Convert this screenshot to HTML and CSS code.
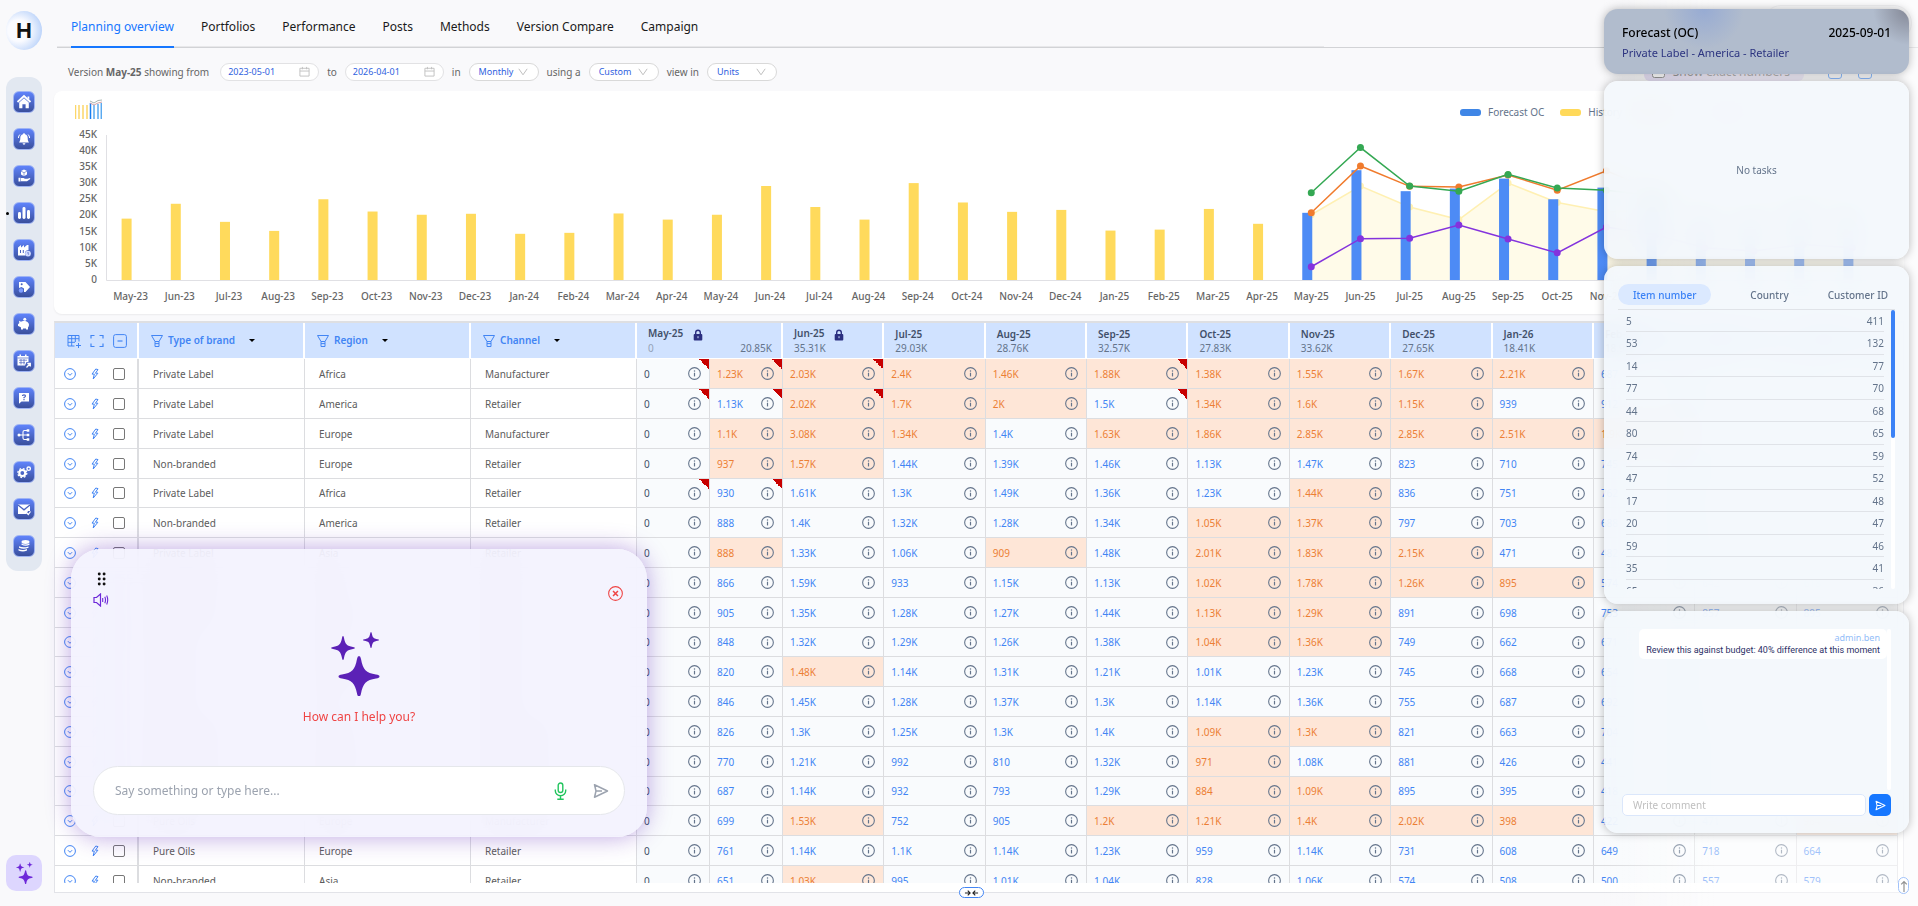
FILE: index.html
```html
<!DOCTYPE html>
<html lang="en">
<head>
    <meta charset="utf-8">
    <title>Planning overview</title>
    <link rel="stylesheet" href="styles.css">
</head>

<body>
<svg class="defs" aria-hidden="true">
    <symbol id="i-info" viewBox="0 0 12 12"><circle cx="6" cy="6" r="5.4" fill="none" stroke="currentColor"/><path d="M6 5.3v3.4" stroke="currentColor" stroke-width="1.1"/><circle cx="6" cy="3.6" r=".7" fill="currentColor"/></symbol>
    <symbol id="i-down" viewBox="0 0 12 12"><circle cx="6" cy="6" r="5.4" fill="none" stroke="currentColor"/><path d="M3.9 5.2 6 7.3l2.100-2.100" fill="none" stroke="currentColor"/></symbol>
    <symbol id="i-bolt" viewBox="0 0 12 12"><path d="M6.800 1 3 6.100h2.300L4.200 11l4.700-5.800H6.400L9 1.600z" fill="none" stroke="currentColor" stroke-linejoin="round"/></symbol>
    <symbol id="i-funnel" viewBox="0 0 14 14"><path d="M1.500 1.500h11L9 7.500H5zM5 7.500v5h4v-5M5 9.600h4" fill="none" stroke="currentColor" stroke-linejoin="round"/></symbol>
    <symbol id="i-lock" viewBox="0 0 10 12"><path d="M2.700 5.500V3.500a2.300 2.300 0 0 1 4.600 0v2" fill="none" stroke="currentColor" stroke-width="1.400"/><rect x=".7" y="5" width="8.600" height="6.500" rx="1" fill="currentColor"/><path d="M5 7.200v2" stroke="#d0e2ff" stroke-width="1"/></symbol>
    <symbol id="i-calendar" viewBox="0 0 12 12"><path d="M1 2.500h10v8.500H1zM1 5.500h10M3.700 1v2.600M8.300 1v2.600" fill="none" stroke="currentColor"/></symbol>
    <symbol id="i-chevron" viewBox="0 0 10 8"><path d="M.8 .8 5 6.800 9.200.8" fill="none" stroke="currentColor"/></symbol>
    <symbol id="i-send" viewBox="0 0 16 16"><path d="M1.500 1.800 14.500 8l-13 6.200L3 8zM3 8h6" fill="none" stroke="currentColor" stroke-width="1.500" stroke-linejoin="round"/></symbol>
    <symbol id="i-sparkles" viewBox="0 0 49 64" preserveAspectRatio="xMinYMid"><path d="M28 24q1.500 0 2 3c2 11 5 14 15 15.500q3.500.5 3.500 2t-3.500 2c-10 1.500-13 5-15 15q-.5 3-2 3t-2-3c-2-10-5-13.500-15-15q-3.500-.5-3.500-2t3.500-2C21 41 24 38 26 27q.5-3 2-3zM12 4q.8 0 1 2c1.300 6.500 3 8 9 9q2 .3 2 1t-2 1c-6 1-7.700 2.500-9 9q-.2 2-1 2t-1-2c-1.300-6.500-3-8-9-9q-2-.3-2-1t2-1c6-1 7.700-2.500 9-9q.2-2 1-2zM40 0q.6 0 .8 1.500c.8 4 1.700 5 5.700 5.700q1.500.2 1.500.8t-1.500.8c-4 .7-4.900 1.700-5.700 5.700Q40.600 16 40 16t-.8-1.500c-.8-4-1.700-5-5.700-5.700Q32 8.600 32 8t1.500-.8c4-.7 4.900-1.700 5.700-5.700Q39.400 0 40 0z" fill="currentColor"/></symbol>
</svg>

<aside class="sidebar">
    <a class="logo" href="#">H</a>
    <nav class="menu" aria-label="Main menu">
        <a href="#" title="Home"><svg viewBox="0 0 16 16"><path d="M1.500 8 8 2l6.500 6" fill="none" stroke="#fff" stroke-width="1.800"/><path d="M3.200 8.500 8 4.200l4.800 4.300v5.700H9.600v-4H6.400v4H3.200zM11.500 2.500h1.800v3.200l-1.800-1.600z"/></svg></a>
        <a href="#" title="Alerts"><svg viewBox="0 0 16 16"><path d="M8 2.200c.7 0 1 .5 1 1 2 .6 2.700 2 2.700 4 0 2.300.7 3 1.300 4.300H3c.6-1.300 1.300-2 1.300-4.300 0-2 .7-3.400 2.700-4 0-.5.300-1 1-1zM6.600 12.300h2.800a1.400 1.400 0 0 1-2.800 0z"/><path d="M3.900 3.500Q2.500 4.800 2.400 7M12.100 3.500q1.400 1.300 1.500 3.500" fill="none" stroke="#fff"/></svg></a>
        <a href="#" title="Products"><svg viewBox="0 0 16 16"><path d="m8 1.500 3 1.500v3.500L8 8.300 5 6.500V3z"/><path d="M5 3.200 8 4.700l3-1.500M8 4.700v3.600" fill="none" stroke="#4a63c0" stroke-width=".6"/><path d="M2.500 9.700h2v3.800h-2zM5 10h2.500l1.500.8h2.500l2.500-.8.3.9-3.300 2.300H5z"/></svg></a>
        <a href="#" class="current" title="Planning"><svg viewBox="0 0 16 16"><rect x="2" y="7" width="3" height="7" rx="1.400"/><rect x="6.500" y="2" width="3" height="12" rx="1.400"/><rect x="11" y="5" width="3" height="9" rx="1.400"/></svg></a>
        <a href="#" title="Production"><svg viewBox="0 0 16 16"><path d="M2 13.500v-8L5 3v2.500L8 3v2.500L11 3h1.500v5a3.500 3.500 0 0 0-3 5.500z"/><path d="M4.500 8v3M7.300 8v3" stroke="#4a63c0"/><circle cx="12" cy="11.600" r="2.900" fill="#cfd9ff"/><path d="M12 10v1.700l1 .8" fill="none" stroke="#4a63c0" stroke-width=".8"/></svg></a>
        <a href="#" title="Pricing"><svg viewBox="0 0 16 16"><path d="M3 3h6.500L14 8l-4.500 5H8V9.500L5.500 8 3 9z"/><circle cx="5.700" cy="5.300" r="1" fill="#4a63c0"/><circle cx="5" cy="11.500" r="2.200" fill="#7f9dff"/></svg></a>
        <a href="#" title="Budget"><svg viewBox="0 0 16 16"><path d="M2 8.500c0-.8 1-.8 1.300-1.500L3 4.800l2 .9c1-.8 5-1.200 6.800.5 1.600 1.300 1.600 3.600.2 5.200V13.500h-2v-1H7v1H5v-2C4 11 3.500 10.300 2 10z"/><circle cx="8.800" cy="3.200" r="1.500"/></svg></a>
        <a href="#" title="Schedule"><svg viewBox="0 0 16 16"><path d="M1.500 3h11v6h-2L9 12.500H1.500zM3.500 1.500H5V3H3.500zM9 1.500h1.500V3H9z"/><path d="M1.500 5h11M3 7.200h8M3 9.700h6M5 6v5.500M8 6v5.500" stroke="#4a63c0" stroke-width=".7"/><path d="m10.500 14.500 3.500-3.700M11.300 10.500H14.300V13.500" fill="none" stroke="#fff" stroke-width="1.300"/></svg></a>
        <a href="#" title="Help"><svg viewBox="0 0 16 16"><path d="M3 3h10v8.500H5.500L3 13.800z"/><path d="M6.500 6q0-1.200 1.500-1.200T9.500 6Q9.500 6.800 8 7.500v.8M8 9v1.200" fill="none" stroke="#4a63c0" stroke-width="1.200"/></svg></a>
        <a href="#" title="Hierarchy"><svg viewBox="0 0 16 16"><path d="M2 8h5M12 3.500H8.500Q7 3.500 7 5v6q0 1.500 1.500 1.500H12M7 8h5" fill="none" stroke="#fff" stroke-width="1.100"/><circle cx="3" cy="8" r="1.500"/><path d="M10.700 2.300h2.600v2.400h-2.600zM10.700 6.800h2.600v2.400h-2.600zM10.700 11.300h2.600v2.400h-2.600z"/></svg></a>
        <a href="#" title="Settings"><svg viewBox="0 0 16 16"><circle cx="6.300" cy="9" r="3" fill="none" stroke="#fff" stroke-width="2.200"/><circle cx="6.300" cy="9" r="4.500" fill="none" stroke="#fff" stroke-width="1.300" stroke-dasharray="1.800 1.730"/><circle cx="12.700" cy="4.700" r="1.700" fill="none" stroke="#fff" stroke-width="1.400"/></svg></a>
        <a href="#" title="Messages"><svg viewBox="0 0 16 16"><path d="M2 3.500h12V10h-2l-1.500 3H2z"/><path d="m2 4 6 4.800L14 4" fill="none" stroke="#4a63c0" stroke-width="1.300"/><path d="m11 12 1.300 1.500 2.200-3" fill="none" stroke="#fff" stroke-width="1.200"/></svg></a>
        <a href="#" title="Data"><svg viewBox="0 0 16 16"><ellipse cx="9.500" cy="4" rx="4" ry="1.900"/><path d="M5.500 5.500q3.500 2 8 0v1.300q-3.500 2-8 0zM3 8.300q4 2 9.500.2v1.300q-5 2-9.500 0zM2.500 10.900q4 2 8.500.2v1.300q-4 2-8.500 0z"/></svg></a>
    </nav>
    <button class="assistant" title="Assistant"><svg><use href="#i-sparkles"/></svg></button>
</aside>

<main>
    <header class="topbar">
        <nav class="tabs">
            <a href="#" class="active">Planning overview</a>
            <a href="#">Portfolios</a>
            <a href="#">Performance</a>
            <a href="#">Posts</a>
            <a href="#">Methods</a>
            <a href="#">Version Compare</a>
            <a href="#">Campaign</a>
        </nav>
        <div class="user"></div>
    </header>

    <form class="filters">
        <span class="version">Version <b>May-25</b> showing from</span>
        <label class="pill date"><input type="text" aria-label="From date" value="2023-05-01"><svg><use href="#i-calendar"/></svg></label>
        <span>to</span>
        <label class="pill date"><input type="text" aria-label="To date" value="2026-04-01"><svg><use href="#i-calendar"/></svg></label>
        <span>in</span>
        <label class="pill choice"><select aria-label="Period"><option>Monthly</option></select><svg><use href="#i-chevron"/></svg></label>
        <span>using a</span>
        <label class="pill choice"><select aria-label="Range"><option>Custom</option></select><svg><use href="#i-chevron"/></svg></label>
        <span>view in</span>
        <label class="pill choice"><select aria-label="Unit"><option>Units</option></select><svg><use href="#i-chevron"/></svg></label>
        <label class="exact"><input type="checkbox"> Show exact numbers</label>
        <button type="button" class="tool" title="Download"></button>
        <button type="button" class="tool" title="Upload"></button>
    </form>

    <section class="card">
        <div class="chart-head">
            <svg class="mini" viewBox="0 0 27 20"><path d="M.5 6v14M4 6v14M8 6v14M12 6v14" stroke="#fcd669" stroke-width="1.500"/><path d="M15.500 4v16" stroke="#1a7ff0" stroke-width="1.500"/><path d="M19 6v14M23 5v15M26.300 4v16" stroke="#5aaaf0" stroke-width="1.500"/><path d="m15 2 4 2 4-2.500L27 1" fill="none" stroke="#a9b5b0"/><path d="m15 4 4 2 4-2 4-1" fill="none" stroke="#d3a4aa"/></svg>
            <ul class="legend">
                <li class="l-forecast">Forecast OC</li>
                <li class="l-history">History</li>
                <li class="l-budget">Budget</li>
                <li class="l-plan">Plan</li>
            </ul>
        </div>
        <svg id="chart"></svg>
    </section>

    <section class="grid">
        <div class="scroll">
            <table>
                <colgroup>
                    <col class="c-tools"><col class="c-attr"><col class="c-attr"><col class="c-attr">
                    <col class="c-half"><col class="c-half">
                    <col span="11">
                </colgroup>
                <thead>
                    <tr id="head">
                        <th class="tools"><div>
                            <svg viewBox="0 0 14 14"><path d="M1 1.500h11v6M7.500 12H1V1.500M1 4.700h11M1 8.300h7M4.700 1.500V12M8.300 1.500V8M11.500 9v5M9 11.500h5" fill="none" stroke="currentColor"/></svg>
                            <svg viewBox="0 0 14 14"><path d="M1 4.500V1.500h3.500M9.500 1.500H13v3M13 9.500v3H9.500M4.500 12.500H1v-3" fill="none" stroke="currentColor" stroke-width="1.200"/></svg>
                            <svg viewBox="0 0 14 14"><rect x=".6" y=".6" width="12.800" height="12.800" rx="2" fill="none" stroke="currentColor"/><path d="M4.500 7h5" stroke="currentColor" stroke-width="1.200"/></svg>
                        </div></th>
                        <th class="attr"><svg><use href="#i-funnel"/></svg>Type of brand<i></i></th>
                        <th class="attr"><svg><use href="#i-funnel"/></svg>Region<i></i></th>
                        <th class="attr"><svg><use href="#i-funnel"/></svg>Channel<i></i></th>
                        <th class="month" colspan="2">May-25 <svg><use href="#i-lock"/></svg><div><em>0</em><span>20.85K</span></div></th>
                        <th class="month">Jun-25 <svg><use href="#i-lock"/></svg><div>35.31K</div></th>
                        <th class="month">Jul-25<div>29.03K</div></th>
                        <th class="month">Aug-25<div>28.76K</div></th>
                        <th class="month">Sep-25<div>32.57K</div></th>
                        <th class="month">Oct-25<div>27.83K</div></th>
                        <th class="month">Nov-25<div>33.62K</div></th>
                        <th class="month">Dec-25<div>27.65K</div></th>
                        <th class="month">Jan-26<div>18.41K</div></th>
                        <th class="month">Feb-26<div>18.92K</div></th>
                        <th class="month">Mar-26<div>22.14K</div></th>
                        <th class="month">Apr-26<div>19.87K</div></th>
                    </tr>
                </thead>
                <tbody id="rows"></tbody>
            </table>
        </div>
        <button class="collapse" title="Collapse"><svg viewBox="0 0 16 8"><path d="M1 4h5M4 1.500 6.500 4 4 6.500M15 4h-5M12 1.500 9.500 4 12 6.500" fill="none" stroke="currentColor" stroke-width="1.200"/></svg></button>
        <button class="to-top" title="Back to top"><svg viewBox="0 0 8 12"><path d="M4 12V1.500M1.200 4.300 4 1.500l2.800 2.800" fill="none" stroke="currentColor" stroke-width="1.200"/></svg></button>
    </section>
</main>

<section class="chat">
    <div class="chat-tools">
        <svg class="drag" viewBox="0 0 8 12"><g fill="#111"><circle cx="2" cy="1.500" r="1.300"/><circle cx="6.300" cy="1.500" r="1.300"/><circle cx="2" cy="6" r="1.300"/><circle cx="6.300" cy="6" r="1.300"/><circle cx="2" cy="10.500" r="1.300"/><circle cx="6.300" cy="10.500" r="1.300"/></g></svg>
        <button class="close" title="Close"><svg viewBox="0 0 14 14"><circle cx="7" cy="7" r="6.400" fill="none" stroke="currentColor"/><path d="m4.700 4.700 4.600 4.600M9.300 4.700 4.700 9.300" stroke="currentColor" stroke-width="1.400"/></svg></button>
        <button class="sound" title="Sound"><svg viewBox="0 0 16 14"><path d="M1 4.500h2.500L7.500 1v12L3.500 9.500H1z" fill="none" stroke="currentColor" stroke-width="1.200"/><path d="M9.700 5v4M11.800 3.800q1.400 3.200 0 6.400M13.700 2.500q2 4.500 0 9" fill="none" stroke="currentColor" stroke-width="1.100"/></svg></button>
    </div>
    <svg class="stars"><use href="#i-sparkles"/></svg>
    <p>How can I help you?</p>
    <form class="ask">
        <input type="text" aria-label="Message" placeholder="Say something or type here...">
        <button type="button" class="mic" title="Speak"><svg viewBox="0 0 12 18"><rect x="3.700" y="1" width="4.600" height="9.500" rx="2.300" fill="none" stroke="currentColor" stroke-width="1.400"/><path d="M.8 7.500v1.300a5.200 5 0 0 0 10.400 0V7.500M6 14v3M2.800 17.200h6.400" fill="none" stroke="currentColor" stroke-width="1.400"/></svg></button>
        <button type="button" class="send" title="Send"><svg><use href="#i-send"/></svg></button>
    </form>
</section>

<aside class="detail">
    <header class="panel title">
        <h2><span>Forecast (OC)</span><span>2025-09-01</span></h2>
        <p>Private Label - America - Retailer</p>
    </header>
    <section class="panel tasks">No tasks</section>
    <section class="panel items">
        <div class="switch">
            <button class="on">Item number</button>
            <button>Country</button>
            <button>Customer ID</button>
        </div>
        <div class="list">
            <table>
                <tr><td>5</td><td>411</td></tr>
                <tr><td>53</td><td>132</td></tr>
                <tr><td>14</td><td>77</td></tr>
                <tr><td>77</td><td>70</td></tr>
                <tr><td>44</td><td>68</td></tr>
                <tr><td>80</td><td>65</td></tr>
                <tr><td>74</td><td>59</td></tr>
                <tr><td>47</td><td>52</td></tr>
                <tr><td>17</td><td>48</td></tr>
                <tr><td>20</td><td>47</td></tr>
                <tr><td>59</td><td>46</td></tr>
                <tr><td>35</td><td>41</td></tr>
                <tr><td>65</td><td>36</td></tr>
            </table>
            <div class="track"><div class="thumb"></div></div>
        </div>
    </section>
    <section class="panel comments">
        <div class="thread">
            <div class="message"><b>admin.ben</b>Review this against budget: 40% difference at this moment</div>
            <div class="track"></div>
        </div>
        <form>
            <input type="text" aria-label="Comment" placeholder="Write comment">
            <button type="button" title="Send"><svg><use href="#i-send"/></svg></button>
        </form>
    </section>
</aside>

<script src="script.js"></script>
</body>
</html>
```
FILE: styles.css
```css
* {
    box-sizing: border-box;
}

body {
    margin: 0;
    height: 100vh;
    display: flex;
    overflow: hidden;
    background: #f9f9fb;
    color: #666;
    font: 10px/14px "Noto Sans", "Open Sans", sans-serif;
}

button, input, select {
    font: inherit;
    color: inherit;
    margin: 0;
    padding: 0;
    border: 0;
    background: none;
    outline: none;
}

a {
    color: inherit;
    text-decoration: none;
}

svg {
    display: block;
    flex: none;
}

.defs {
    position: absolute;
    width: 0;
    height: 0;
}

/* sidebar */
.sidebar {
    flex: 0 0 54px;
    padding: 11px 12px 15px 6px;
    display: flex;
    flex-direction: column;
}

.logo {
    height: 39px;
    margin-bottom: 27px;
    border-radius: 50%;
    background: radial-gradient(circle at 35% 50%, #fafbff 35%, #c9dcfb 70%, #8fb6f7);
    color: #111;
    font: bold 22px/39px "Liberation Sans", sans-serif;
    text-align: center;
}

.menu {
    display: flex;
    flex-direction: column;
    align-items: center;
    gap: 15px;
    padding: 14px 0;
    border-radius: 12px;
    background: #e2e8f1;
}

.menu a {
    position: relative;
    width: 22px;
    height: 22px;
    padding: 2px;
    border: 1px solid #9fb4f4;
    border-radius: 6px;
    background: linear-gradient(#5f83fb, #3a4f9c);
}

.menu svg {
    width: 16px;
    height: 16px;
    fill: #fff;
}

.menu .current::before {
    content: "";
    position: absolute;
    left: -8px;
    top: 9px;
    width: 3px;
    height: 3px;
    border-radius: 50%;
    background: #000;
}

.assistant {
    margin-top: auto;
    height: 36px;
    border-radius: 10px;
    background: #ddd6fe;
    color: #6d28d9;
}

.assistant svg {
    width: 17px;
    height: 22px;
    margin: auto;
}

/* main column */
main {
    flex: 1;
    min-width: 0;
    display: flex;
    flex-direction: column;
}

.topbar {
    height: 48px;
    margin-left: 3px;
    border-bottom: 1px solid #d2d3d6;
    display: flex;
    justify-content: space-between;
}

.tabs {
    width: 1267px;
    padding: 0 14px;
    display: flex;
    gap: 27px;
    border-bottom: 1px solid #e8e8ea;
    color: #1a1a1a;
    font-size: 12px;
}

.tabs a {
    padding-top: 19px;
    line-height: 16px;
}

.tabs .active {
    color: #1677ff;
    border-bottom: 2px solid #1677ff;
    margin-bottom: -2px;
}

.user {
    width: 149px;
    height: 36px;
    margin: 5px 6px 0 0;
    border-radius: 18px;
    border: 1px solid #e4e4e8;
}

.filters {
    height: 43px;
    padding: 4px 46px 0 14px;
    display: flex;
    align-items: center;
    gap: 8px;
}

.version {
    margin-right: 3px;
}

.pill {
    height: 18px;
    display: flex;
    align-items: center;
    justify-content: space-between;
    border: 1px solid #d9d9d9;
    border-radius: 9px;
    background: #fff;
    color: #2f62e0;
    font-size: 9px;
}

.date {
    width: 99px;
    padding: 0 8px 0 7px;
    border-color: #e2e2e4;
}

.date input {
    width: 60px;
}

.date svg {
    width: 11px;
    height: 11px;
    color: #bfbfbf;
}

.choice {
    width: 70px;
    padding: 0 10px 0 9px;
}

.choice select {
    width: 38px;
    appearance: none;
}

.choice svg {
    width: 10px;
    height: 8px;
    color: #bfbfbf;
}

.exact {
    margin-left: auto;
    margin-right: 8px;
    height: 18px;
    padding: 0 14px 0 8px;
    display: flex;
    align-items: center;
    gap: 8px;
    border-radius: 6px;
    background: #e4dcf6;
    font-size: 12px;
}

.tool {
    width: 14px;
    height: 14px;
    margin-left: 8px;
    border: 1px solid #1677ff;
    border-radius: 3px;
}

.card {
    height: 223px;
    margin-right: 14px;
    padding-top: 8px;
    border-radius: 8px;
    background: #fff;
    box-shadow: 0 1px 2px rgba(0, 0, 0, .06);
}

.chart-head {
    height: 22px;
    padding-left: 21px;
    display: flex;
    justify-content: space-between;
}

.mini {
    width: 27px;
    height: 20px;
}

.legend {
    width: 444px;
    margin: 0;
    padding: 6px 0 0;
    list-style: none;
    display: flex;
    gap: 16px;
    color: #64748b;
}

.legend li::before {
    content: "";
    display: inline-block;
    width: 21px;
    height: 7px;
    margin-right: 7px;
    border-radius: 3px;
    background: #ffd95a;
}

.legend .l-forecast::before {
    background: #3f86e6;
}

.legend .l-budget::before {
    background: #f07b2d;
}

.legend .l-plan::before {
    background: #8433dd;
}

#chart {
    width: 100%;
    height: 193px;
}

#chart text {
    fill: #666;
    font-weight: 500;
}

/* planning table */
.grid {
    position: relative;
    flex: 1;
    min-height: 0;
    margin: 7px 14px 13px 0;
    padding-bottom: 9px;
    display: flex;
    border: 1px solid #e2e3e8;
    border-top: 2px solid #dedfe2;
    background: #fff;
}

.scroll {
    flex: 1;
    overflow: hidden;
    padding-right: 5px;
}

.grid table {
    width: 100%;
    table-layout: fixed;
    border-collapse: separate;
    border-spacing: 0;
}

.c-tools {
    width: 84px;
}

.c-attr {
    width: 166px;
}

.c-half {
    width: 73px;
}

.grid th {
    height: 36px;
    padding: 0;
    background: #d0e2ff;
    border-right: 2px solid #fff;
    border-bottom: 1px solid #fff;
    text-align: left;
    font-weight: 600;
    white-space: nowrap;
}

.grid th svg {
    display: inline-block;
    vertical-align: middle;
}

.grid .attr {
    padding-left: 11px;
    color: #4285f4;
}

.attr svg {
    width: 14px;
    height: 14px;
    margin-right: 4px;
}

.attr i {
    display: inline-block;
    margin-left: 14px;
    vertical-align: 2px;
    border: 3px solid transparent;
    border-top-color: #000;
    border-bottom: 0;
}

.tools div {
    display: flex;
    justify-content: space-between;
    padding: 0 10px 0 12px;
    color: #4285f4;
}

.tools div svg {
    width: 14px;
    height: 14px;
}

.grid .month {
    padding-left: 11px;
    color: #42506a;
}

.month svg {
    width: 10px;
    height: 12px;
    margin-left: 7px;
    color: #2b2f80;
}

.month div {
    display: flex;
    justify-content: space-between;
    padding-right: 9px;
    font-weight: 400;
    color: #64748b;
}

.month em {
    font-style: normal;
    color: #94a3b8;
}

.grid td {
    height: 30px;
    padding: 0;
    border-right: 1px solid #dcdde0;
    border-bottom: 1px solid #dcdde0;
    background-color: #f9fbfd;
    color: #4285f4;
}

.grid tr:nth-child(5n) td {
    height: 29px;
}

.grid td.tools {
    background: #fff;
    border-right-width: 2px;
}

.tools button {
    display: block;
}

.tools div button svg {
    width: 12px;
    height: 12px;
}

.tools input {
    display: block;
    width: 12px;
    height: 12px;
    border: 1px solid #777;
    border-radius: 2px;
    appearance: none;
    background: #fff;
}

.grid td.tools div {
    padding: 0 12px 0 9px;
    align-items: center;
}

.grid td.attr {
    padding-left: 14px;
    background: #fff;
    color: #5c5c5c;
}

.value div {
    display: flex;
    justify-content: space-between;
    align-items: center;
    padding: 0 8px 0 7px;
}

.value svg {
    width: 13px;
    height: 13px;
    color: #64748b;
}

.grid td.base {
    color: #42506a;
}

.grid td.high {
    background-color: #fee6d7;
    color: #ec7f35;
}

.flag {
    background-image: linear-gradient(to bottom left, #c80000 50%, transparent 50%);
    background-position: top right;
    background-size: 10px 10px;
    background-repeat: no-repeat;
}

.collapse, .to-top {
    position: absolute;
    border: 1px solid #4285f4;
    border-radius: 6px;
    background: #fff;
    color: #222;
}

.collapse {
    left: calc(50% - 20px);
    bottom: -6px;
    width: 25px;
    height: 11px;
}

.collapse svg {
    width: 15px;
    height: 8px;
    margin: auto;
}

.to-top {
    right: -6px;
    bottom: -2px;
    width: 11px;
    height: 17px;
}

.to-top svg {
    width: 8px;
    height: 12px;
    margin: auto;
}

/* assistant */
.chat {
    position: fixed;
    left: 71px;
    bottom: 69px;
    width: 576px;
    padding: 23px 22px 22px;
    display: flex;
    flex-direction: column;
    border-radius: 30px;
    background: rgba(243, 241, 254, .88);
    backdrop-filter: blur(14px);
    box-shadow: 0 0 24px rgba(91, 33, 182, .4);
}

.chat-tools {
    display: grid;
    grid-template-columns: 1fr 14px;
    align-items: center;
    row-gap: 7px;
    padding: 0 3px 0 0;
}

.drag {
    width: 9px;
    height: 14px;
    margin-left: 4px;
}

.close {
    grid-row: 1 / 3;
    grid-column: 2;
    margin-top: 7px;
    color: #ef4444;
}

.close svg {
    width: 15px;
    height: 15px;
}

.sound {
    width: 16px;
    color: #6d28d9;
}

.sound svg {
    width: 16px;
    height: 14px;
}

.stars {
    width: 56px;
    height: 64px;
    margin: 25px auto 0;
    color: #5b21b6;
}

.chat p {
    margin: 13px 0 41px;
    text-align: center;
    color: #ef4444;
    font-size: 12px;
    line-height: 16px;
}

.ask {
    display: flex;
    align-items: center;
    height: 49px;
    padding: 0 15px 0 21px;
    border: 1px solid #e5e7eb;
    border-radius: 25px;
    background: #fff;
    font-size: 12px;
}

.ask input {
    flex: 1;
    height: 30px;
}

.ask ::placeholder {
    color: #9ca3af;
}

.mic {
    margin-right: 26px;
    color: #22c55e;
}

.mic svg {
    width: 13px;
    height: 18px;
}

.send {
    color: #9ca3af;
}

.send svg {
    width: 16px;
    height: 16px;
}

/* detail panels on the right */
.detail {
    position: fixed;
    top: 0;
    right: 0;
    bottom: 0;
    width: 314px;
    padding: 9px 9px 0 0;
    display: flex;
    flex-direction: column;
    gap: 7px;
    background: linear-gradient(90deg, rgba(255, 255, 255, 0), rgba(255, 255, 255, .5) 35%);
    color: #64748b;
}

.panel {
    border-radius: 14px;
    background: rgba(243, 247, 252, .9);
    backdrop-filter: blur(14px);
    box-shadow: 0 0 10px rgba(0, 0, 0, .28);
}

.title {
    padding: 15px 18px 13px;
    background: radial-gradient(circle at 100% 0, rgba(125, 128, 142, .9), transparent 36px), radial-gradient(circle at 100px 0, #97abd3, transparent 40px), #b1bccd;
}

.title h2 {
    margin: 0;
    display: flex;
    justify-content: space-between;
    color: #000;
    font-size: 12px;
    font-weight: 500;
    line-height: 17px;
}

.title p {
    margin: 4px 0 0;
    font-size: 11px;
    line-height: 16px;
    color: #2c3480;
}

.tasks {
    height: 178px;
    display: flex;
    align-items: center;
    justify-content: center;
}

.items {
    padding: 18px 14px 15px;
}

.switch {
    display: flex;
    justify-content: space-between;
    align-items: center;
    padding: 0 7px 4px 0;
    border-bottom: 1px solid #e0e3e8;
}

.switch button {
    height: 21px;
    font-weight: 500;
}

.switch .on {
    padding: 0 15px;
    border-radius: 11px;
    background: #dbe9ff;
    color: #3b82f6;
}

.list {
    height: 279px;
    padding-left: 8px;
    display: flex;
    justify-content: space-between;
    overflow: hidden;
}

.list table {
    width: 258px;
    border-spacing: 0;
}

.list td {
    height: 22px;
    padding: 0;
    border-bottom: 1px solid #e0e3e8;
}

.list tr:nth-child(even) td {
    height: 23px;
}

.list td:last-child {
    text-align: right;
}

.track {
    width: 4px;
    border-radius: 2px;
    background: #fff;
}

.thumb {
    height: 128px;
    border-radius: 2px;
    background: #3b82f6;
}

.comments {
    padding: 18px 18px 17px;
}

.thread {
    height: 161px;
    display: flex;
    justify-content: flex-end;
    align-items: flex-start;
}

.thread .track {
    align-self: stretch;
}

.message {
    padding: 3px 7px;
    border-radius: 5px;
    background: #fff;
    color: #2c2f66;
    font: 9px/12px Roboto, sans-serif;
    text-align: right;
}

.message b {
    display: block;
    font-family: "Noto Sans", sans-serif;
    font-weight: 400;
    color: #93bdf8;
}

.comments form {
    display: flex;
    gap: 3px;
    margin-top: 4px;
}

.comments input {
    flex: 1;
    height: 22px;
    padding: 0 10px;
    border: 1px solid #dbe7fb;
    border-radius: 5px;
    background: #fff;
}

.comments ::placeholder {
    color: #bfbfbf;
}

.comments button {
    width: 22px;
    height: 22px;
    border-radius: 5px;
    background: #1677ff;
    color: #fff;
}

.comments button svg {
    width: 11px;
    height: 11px;
    margin: auto;
}
```
FILE: script.js
```javascript
// "*" marks a highlighted value, "!" a flagged one
var rows = [
    ['Private Label', 'Africa', 'Manufacturer', '0! 1.23K*! 2.03K*! 2.4K* 1.46K* 1.88K*! 1.38K* 1.55K* 1.67K* 2.21K* 687 741 702'],
    ['Private Label', 'America', 'Retailer', '0! 1.13K! 2.02K*! 1.7K* 2K* 1.5K! 1.34K* 1.6K* 1.15K* 939 912 877 864'],
    ['Private Label', 'Europe', 'Manufacturer', '0 1.1K* 3.08K* 1.34K* 1.4K 1.63K* 1.86K* 2.85K* 2.85K* 2.51K* 1.9K* 1.2K 1.1K'],
    ['Non-branded', 'Europe', 'Retailer', '0 937* 1.57K* 1.44K 1.39K 1.46K 1.13K 1.47K 823 710 745 802 790'],
    ['Private Label', 'Africa', 'Retailer', '0! 930! 1.61K 1.3K 1.49K 1.36K 1.23K 1.44K* 836 751 762 811 795'],
    ['Non-branded', 'America', 'Retailer', '0 888 1.4K 1.32K 1.28K 1.34K 1.05K* 1.37K* 797 703 688 754 731'],
    ['Private Label', 'Asia', 'Retailer', '0 888* 1.33K 1.06K 909* 1.48K 2.01K* 1.83K* 2.15K* 471 482 530 512'],
    ['Non-branded', 'Africa', 'Retailer', '0 866 1.59K 933 1.15K 1.13K 1.02K* 1.78K* 1.26K* 895* 574 642 618'],
    ['Private Label', 'Europe', 'Retailer', '0 905 1.35K 1.28K 1.27K 1.44K 1.13K* 1.29K* 891 698 753 857 895'],
    ['Pure Oils', 'Africa', 'Retailer', '0 848 1.32K 1.29K 1.26K 1.38K 1.04K* 1.36K* 749 662 671 720 705'],
    ['Pure Oils', 'America', 'Retailer', '0 820 1.48K* 1.14K 1.31K 1.21K 1.01K 1.23K 745 668 654 713 699'],
    ['Pure Oils', 'Asia', 'Retailer', '0 846 1.45K 1.28K 1.37K 1.3K 1.14K 1.36K 755 687 692 741 728'],
    ['Non-branded', 'Europe', 'Manufacturer', '0 826 1.3K 1.25K 1.3K 1.4K 1.09K* 1.3K* 821 663 704 766 740'],
    ['Non-branded', 'America', 'Manufacturer', '0 770 1.21K 992 810 1.32K 971* 1.08K 881 426 441 498 476'],
    ['Non-branded', 'Asia', 'Manufacturer', '0 687 1.14K 932 793 1.29K 884* 1.09K* 895 395 418 463 450'],
    ['Pure Oils', 'Europe', 'Manufacturer', '0 699 1.53K* 752 905 1.2K* 1.21K* 1.4K* 2.02K* 398* 422 471 964*'],
    ['Pure Oils', 'Europe', 'Retailer', '0 761 1.14K 1.1K 1.14K 1.23K 959 1.14K 731 608 649 718 664'],
    ['Non-branded', 'Asia', 'Retailer', '0 651 1.03K* 995 1.01K 1.04K 828 1.06K 574 508 500 557 579']
];

function icon(name) {
    return '<svg><use href="#i-' + name + '"/></svg>';
}

document.getElementById('rows').innerHTML = rows.map(function (row) {
    var html = '<td class="tools"><div><button title="Expand">' + icon('down') + '</button>' +
        '<button title="Actions">' + icon('bolt') + '</button>' +
        '<input type="checkbox" aria-label="Select row"></div></td>';
    for (var i = 0; i < 3; i++) {
        html += '<td class="attr">' + row[i] + '</td>';
    }
    row[3].split(' ').forEach(function (v, n) {
        var cls = 'value';
        if (n === 0) cls += ' base';
        if (v.indexOf('*') > 0) cls += ' high';
        if (v.indexOf('!') > 0) cls += ' flag';
        html += '<td class="' + cls + '"><div>' + v.replace(/[*!]/g, '') + icon('info') + '</div></td>';
    });
    return '<tr>' + html + '</tr>';
}).join('');

// chart, values in thousands
var sales = [19, 23.6, 18, 15.2, 25, 21.2, 20.2, 20.5, 14.3, 14.6, 20.6, 18.7,
    20.2, 29.1, 22.6, 18.7, 30, 24, 21.1, 21.7, 15.3, 15.6, 22, 17.4];
var forecast = [20.8, 34, 27.5, 28.3, 31.4, 25, 28.6, 26, 19, 19, 22, 20];
var budget = [20.8, 35.3, 29, 28.8, 32.5, 27.8, 33.8, 27.6, 18.4, 19, 22, 20];
var plan = [27, 41, 29.1, 27.5, 32.7, 28.5, 27.8, 26, 20, 20, 23, 21];
var stock = [4.1, 12.8, 12.9, 17, 12.7, 8.4, 16.4, 14, 10, 9, 11, 10];
var months = ['Jan', 'Feb', 'Mar', 'Apr', 'May', 'Jun', 'Jul', 'Aug', 'Sep', 'Oct', 'Nov', 'Dec'];

function drawChart() {
    var svg = document.getElementById('chart');
    var left = 52, bottom = 159, unit = 3.23;
    var step = (svg.clientWidth - 27 - left) / 36;
    var x = function (i) { return left + step * (i + .5); };
    var y = function (v) { return bottom - v * unit; };
    var lastYear = sales.slice(12);
    var out = '';

    for (var v = 0; v <= 45; v += 5) {
        out += '<text x="43" y="' + (y(v) + 3) + '" text-anchor="end">' + (v ? v + 'K' : 0) + '</text>';
    }
    for (var i = 0; i < 36; i++) {
        var year = 23 + Math.floor((i + 4) / 12);
        out += '<text x="' + x(i) + '" y="179" text-anchor="middle">' + months[(i + 4) % 12] + '-' + year + '</text>';
    }

    var points = function (data) {
        return data.map(function (d, n) { return x(n + 24) + ',' + y(d); }).join(' ');
    };
    var line = function (data, color) {
        var s = '<polyline fill="none" stroke="' + color + '" stroke-width="1.5" points="' + points(data) + '"/>';
        data.forEach(function (d, n) {
            s += '<circle cx="' + x(n + 24) + '" cy="' + y(d) + '" r="3.5" fill="' + color + '"/>';
        });
        return s;
    };

    out += '<polygon fill="#fffbe9" points="' + x(24) + ',' + bottom + ' ' + points(lastYear) + ' ' + x(35) + ',' + bottom + '"/>';
    out += line(lastYear, '#fff0b3');
    sales.concat(forecast).forEach(function (d, n) {
        out += '<rect x="' + (x(n) - 9) + '" y="' + y(d) + '" width="10" height="' + d * unit + '" fill="' + (n < 24 ? '#ffda5c' : '#4d8bf5') + '"/>';
    });
    out += '<path d="M' + (left + .5) + ' 14V' + (bottom + .5) + 'H' + (svg.clientWidth - 27) + '" fill="none" stroke="#e0e0e4"/>';
    out += line(stock, '#8433dd') + line(budget, '#f07b2d') + line(plan, '#34a853');
    svg.innerHTML = out;
}

drawChart();
window.addEventListener('resize', drawChart);
```
